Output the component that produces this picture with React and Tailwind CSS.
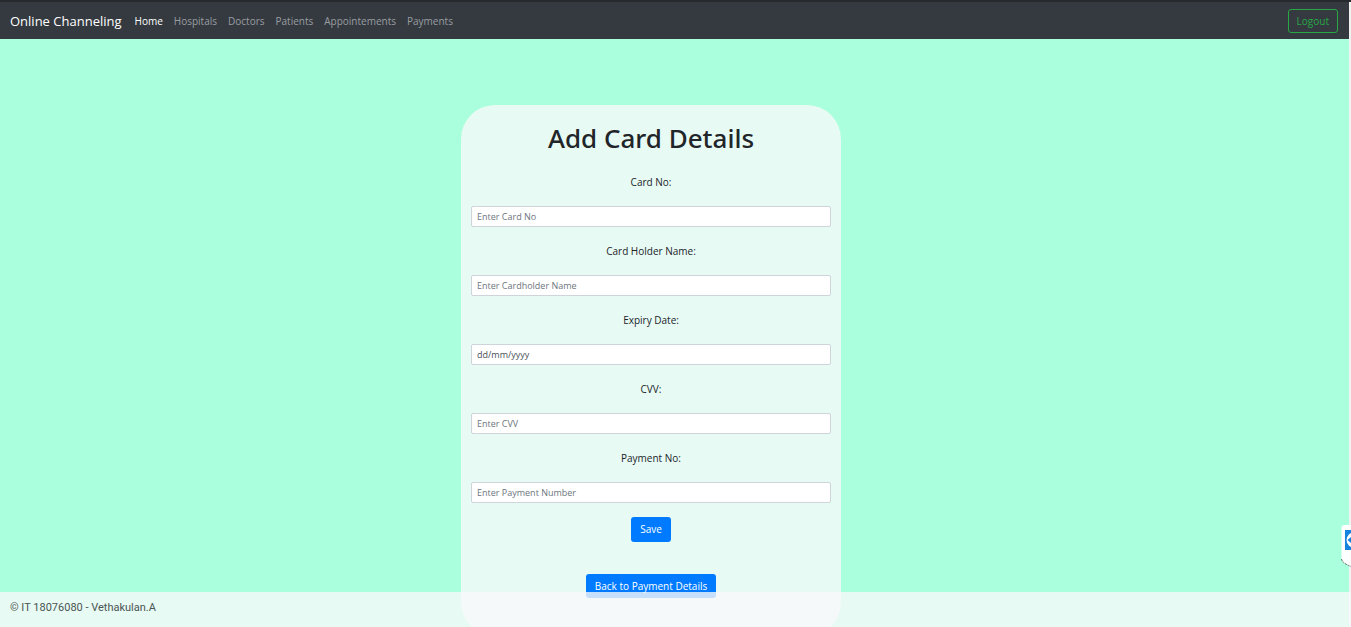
const links = ['Home', 'Hospitals', 'Doctors', 'Patients', 'Appointements', 'Payments'];

const fields = [
  { id: 'card-no', label: 'Card No:', placeholder: 'Enter Card No' },
  { id: 'holder', label: 'Card Holder Name:', placeholder: 'Enter Cardholder Name' },
  { id: 'expiry', label: 'Expiry Date:', placeholder: 'dd/mm/yyyy', dark: true },
  { id: 'cvv', label: 'CVV:', placeholder: 'Enter CVV' },
  { id: 'payment-no', label: 'Payment No:', placeholder: 'Enter Payment Number' },
];

function Navbar() {
  return (
    <nav className="flex items-center bg-[#343a40] pt-[7px] pr-[11px] pb-[6px] pl-[10px]">
      <a href="#" className="mr-[13px] text-[13px] leading-5 text-white">Online Channeling</a>
      <ul className="flex gap-[11px] text-[10px] leading-4">
        {links.map((name, i) => (
          <li key={name}>
            <a href="#" className={i === 0 ? 'text-white' : 'text-[#9a9da0]'}>{name}</a>
          </li>
        ))}
      </ul>
      <button type="button" className="ml-auto rounded-[3px] border border-[#28a745] px-2 py-[3px] text-[10px] leading-4 text-[#28a745]">
        Logout
      </button>
    </nav>
  );
}

function Field({ id, label, placeholder, dark }) {
  return (
    <div className="flex flex-col">
      <label htmlFor={id} className="mb-4 self-center text-[10px] leading-4 text-[#212529]">{label}</label>
      <input
        id={id}
        type="text"
        placeholder={placeholder}
        className={`h-[21px] w-full rounded-[2px] border border-[#ced4da] bg-white px-[5px] text-[9px] text-[#495057] ${dark ? 'placeholder:text-[#495057]' : 'placeholder:text-[#6c757d]'}`}
      />
    </div>
  );
}

function RemoteTab() {
  return (
    <button type="button" aria-label="Open remote panel" className="absolute right-0 bottom-[60px] h-[43px] w-[10px]">
      <svg viewBox="0 0 10 43" className="h-full w-full">
        <path d="M10 1H4Q.5 1 .5 4V35Q.5 39 10 42.500Z" fill="#fff" />
        <path d="M.5 35Q1 39 10 42.500" fill="none" stroke="#55615d" strokeDasharray="2 1" />
        <rect x="4" y="6" width="6" height="20" fill="#1683df" />
        <circle cx="13" cy="16" r="7.5" fill="#fff" />
        <path d="M6.500 16L10 13V15H10V17V19Z" fill="#1683df" />
      </svg>
    </button>
  );
}

export default function App() {
  return (
    <div className="relative flex h-screen flex-col overflow-hidden border-t-2 border-[#26292e] bg-[#f1f3f2] pr-[2px] font-['Open_Sans',sans-serif]">
      <div className="flex grow flex-col bg-[#aaffdd]">
        <Navbar />
        <main className="flex h-0 grow items-start justify-center pt-[66px] pr-[47px]">
          <form className="flex w-[380px] shrink-0 flex-col items-center rounded-[34px] bg-[#f8f9fa]/80 px-[10px] pt-[15px] pb-[38px]" onSubmit={(e) => e.preventDefault()}>
            <h1 className="mb-[18px] font-['Noto_Sans',sans-serif] text-[26px] leading-9 font-medium text-[#212529]">Add Card Details</h1>
            <div className="flex w-full flex-col gap-4">
              {fields.map((field) => <Field key={field.id} {...field} />)}
            </div>
            <button type="submit" className="mt-[14px] rounded-[3px] bg-[#007bff] px-[9px] py-1 text-[10px] leading-[17px] text-white">Save</button>
            <a href="#" className="mt-8 rounded-[3px] bg-[#007bff] px-[9px] py-1 text-[10px] leading-4 text-white">Back to Payment Details</a>
          </form>
        </main>
      </div>
      <footer className="absolute inset-x-0 bottom-0 bg-[#f8f9fa]/80 px-[10px] pt-2 pb-[11px] font-['Roboto',sans-serif] text-[11px] leading-4 text-[#4a5553]">
        © IT 18076080 - Vethakulan.A
      </footer>
      <RemoteTab />
    </div>
  );
}
